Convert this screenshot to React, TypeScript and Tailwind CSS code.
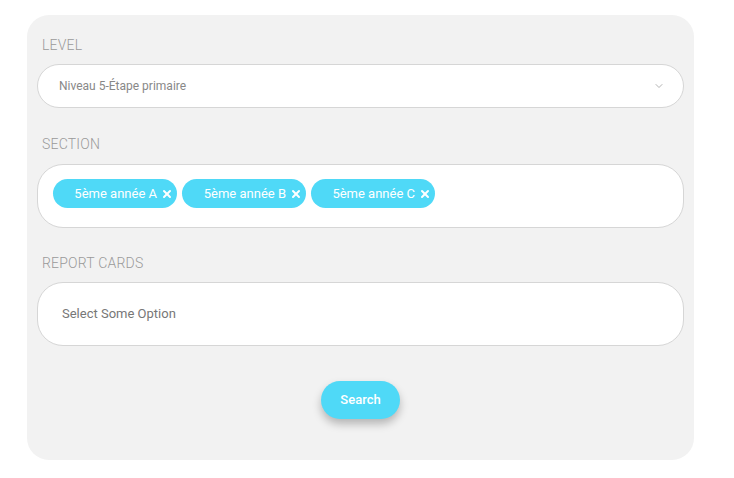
import { ChevronDown, X } from "lucide-react";

const sections = ["5ème année A", "5ème année B", "5ème année C"];

function Label({ children }: { children: string }) {
  return (
    <div className="h-5 pl-[5px] text-[14px] leading-5 font-light tracking-[0.2px] text-[#9a9a9a]">
      {children}
    </div>
  );
}

export default function App() {
  return (
    <div className="min-h-screen bg-white pt-[15px] pl-[27px]" style={{ fontFamily: "Roboto, 'Liberation Sans', sans-serif" }}>
      <div className="flex h-[445px] w-[667px] flex-col rounded-[22px] bg-[#f2f2f2] px-[10px] pt-5">
        <Label>LEVEL</Label>
        <div className="mt-[9px] flex h-[44px] items-center justify-between rounded-full border border-[#d6d6d6] bg-white pr-[18px] pl-[21px]">
          <span className="text-[12px] text-[#888]">Niveau 5-Étape primaire</span>
          <ChevronDown size={12} strokeWidth={1.5} className="text-[#999]" />
        </div>

        <div className="mt-[26px]">
          <Label>SECTION</Label>
        </div>
        <div className="mt-[10px] flex h-[64px] items-start gap-[5px] rounded-[26px] border border-[#d6d6d6] bg-white pt-[14px] pl-[15px]">
          {sections.map((s) => (
            <span
              key={s}
              className="flex h-[29px] w-[124px] items-center justify-end gap-[4px] rounded-full bg-[#4fd9f7] pr-[4px] text-[13px] text-white"
            >
              {s}
              <X size={12} strokeWidth={4} />
            </span>
          ))}
        </div>

        <div className="mt-[25px]">
          <Label>REPORT CARDS</Label>
        </div>
        <div className="mt-[9px] flex h-[64px] items-center rounded-[26px] border border-[#d6d6d6] bg-white pl-[24px]">
          <span className="text-[13px] text-[#777]">Select Some Option</span>
        </div>

        <div className="mt-[35px] flex justify-center">
          <button
            type="button"
            className="h-[38px] w-[79px] rounded-full bg-[#4fd9f7] text-[13px] font-medium text-white shadow-[0_5px_8px_rgba(0,0,0,0.25)]"
          >
            Search
          </button>
        </div>
      </div>
    </div>
  );
}
